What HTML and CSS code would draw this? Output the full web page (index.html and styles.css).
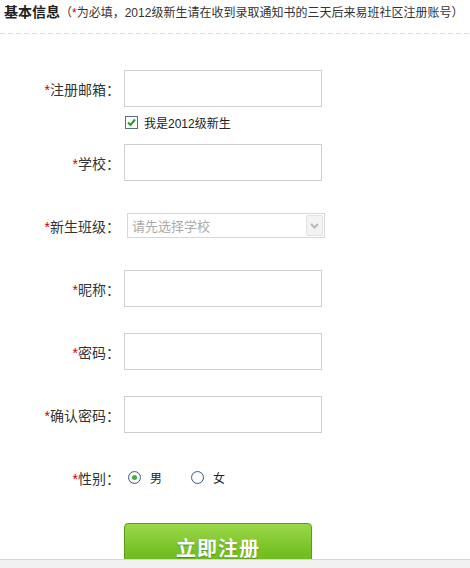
FILE: index.html
```html
<!DOCTYPE html>
<html lang="zh-CN">

<head>
  <meta charset="UTF-8">
  <meta name="viewport" content="width=device-width, initial-scale=1.0">
  <title>基本信息 - 注册</title>
  <link rel="stylesheet" href="styles.css">
</head>

<body>
  <div class="title">
    <strong>基本信息</strong><span class="tip">（<em>*</em>为必填，2012级新生请在收到录取通知书的三天后来易班社区注册账号）</span>
  </div>
  <div class="dash-line"></div>

  <form class="reg-form">
    <div class="row">
      <label class="lbl"><em>*</em>注册邮箱：</label>
      <input type="text" class="txt">
    </div>
    <div class="check-row">
      <span class="checkbox">
        <svg width="9" height="9" viewBox="0 0 9 9"><path d="M1 4.5 L3.5 7 L8 1.5" fill="none" stroke="#22a022" stroke-width="2"/></svg>
      </span>
      <span>我是2012级新生</span>
    </div>
    <div class="row">
      <label class="lbl"><em>*</em>学校：</label>
      <input type="text" class="txt">
    </div>
    <div class="row">
      <label class="lbl"><em>*</em>新生班级：</label>
      <div class="select">
        <span class="placeholder">请先选择学校</span>
        <span class="arrow">
          <svg width="9" height="6" viewBox="0 0 9 6"><path d="M1 1 L4.5 4.5 L8 1" fill="none" stroke="#b8b8b8" stroke-width="2"/></svg>
        </span>
      </div>
    </div>
    <div class="row">
      <label class="lbl"><em>*</em>昵称：</label>
      <input type="text" class="txt">
    </div>
    <div class="row">
      <label class="lbl"><em>*</em>密码：</label>
      <input type="password" class="txt">
    </div>
    <div class="row">
      <label class="lbl"><em>*</em>确认密码：</label>
      <input type="password" class="txt">
    </div>
    <div class="row">
      <label class="lbl"><em>*</em>性别：</label>
      <div class="radios">
        <span class="radio checked"></span><span class="radio-text">男</span>
        <span class="radio"></span><span class="radio-text">女</span>
      </div>
    </div>
    <div class="submit-row">
      <button type="button" class="btn-reg">立即注册</button>
    </div>
  </form>

  <div class="status-bar"></div>
</body>

</html>
```

FILE: styles.css
```css
body {
  margin: 0;
  font-family: "Liberation Sans", "Noto Sans CJK SC", sans-serif;
  color: #333;
  background: #fff;
}

em {
  font-style: normal;
  color: #c00;
}

.title {
  height: 33px;
  padding: 1px 0 0 4px;
  box-sizing: border-box;
  white-space: nowrap;
  line-height: 22px;
}

.title strong {
  font-size: 14px;
  color: #222;
}

.tip {
  font-size: 12px;
  color: #333;
}

.dash-line {
  height: 1px;
  background: repeating-linear-gradient(to right, #dcdcdc 0 5px, transparent 5px 8px);
}

.reg-form {
  padding-top: 36px;
}

.row {
  display: flex;
  align-items: center;
  height: 37px;
  margin-bottom: 26px;
}

.lbl {
  width: 120px;
  text-align: right;
  font-size: 14px;
  color: #333;
}

.txt {
  width: 198px;
  height: 37px;
  margin: 0 0 0 4px;
  padding: 0 6px;
  box-sizing: border-box;
  border: 1px solid #cfcfcf;
  outline: none;
  font-size: 14px;
}

.check-row {
  display: flex;
  align-items: center;
  gap: 6px;
  margin: -17px 0 16px 125px;
  height: 12px;
  font-size: 12px;
  color: #222;
}

.checkbox {
  display: flex;
  align-items: center;
  justify-content: center;
  width: 11px;
  height: 11px;
  border: 1px solid #5a6d87;
  background: #fff;
}

.select {
  display: flex;
  align-items: center;
  justify-content: space-between;
  width: 196px;
  height: 23px;
  margin-left: 7px;
  border: 1px solid #d7d7d7;
  background: #fff;
}

.placeholder {
  padding-left: 4px;
  font-size: 13px;
  color: #aaa;
}

.arrow {
  display: flex;
  align-items: center;
  justify-content: center;
  width: 15px;
  height: 19px;
  margin-right: 1px;
  border: 1px solid #e2e2e2;
  border-radius: 2px;
  background: #f3f3f3;
}

.radios {
  display: flex;
  align-items: center;
  padding-left: 8px;
  font-size: 12px;
  color: #222;
}

.radio {
  width: 11px;
  height: 11px;
  border: 1px solid #3f5f84;
  border-radius: 50%;
  background: radial-gradient(circle, #fff 40%, #e4e4e4 100%);
  position: relative;
}

.radio.checked::after {
  content: '';
  position: absolute;
  left: 3px;
  top: 3px;
  width: 5px;
  height: 5px;
  border-radius: 50%;
  background: #3cb33c;
}

.radio-text {
  margin: 0 29px 0 9px;
}

.submit-row {
  padding: 1px 0 0 124px;
}

.btn-reg {
  width: 188px;
  height: 50px;
  padding: 0;
  border: 1px solid #5b9c18;
  border-radius: 4px;
  background: linear-gradient(#9bd84a, #74c022 60%, #6ab51c);
  color: #fff;
  font-size: 20px;
  font-weight: bold;
  font-family: "Noto Sans CJK SC", sans-serif;
  line-height: 48px;
  letter-spacing: 1px;
  text-shadow: 0 1px 1px #4c8a12;
  cursor: pointer;
}

.status-bar {
  position: fixed;
  left: 0;
  right: 0;
  bottom: 0;
  height: 8px;
  border-top: 1px solid #d6d6d6;
  background: #f0f0f0;
}
```
